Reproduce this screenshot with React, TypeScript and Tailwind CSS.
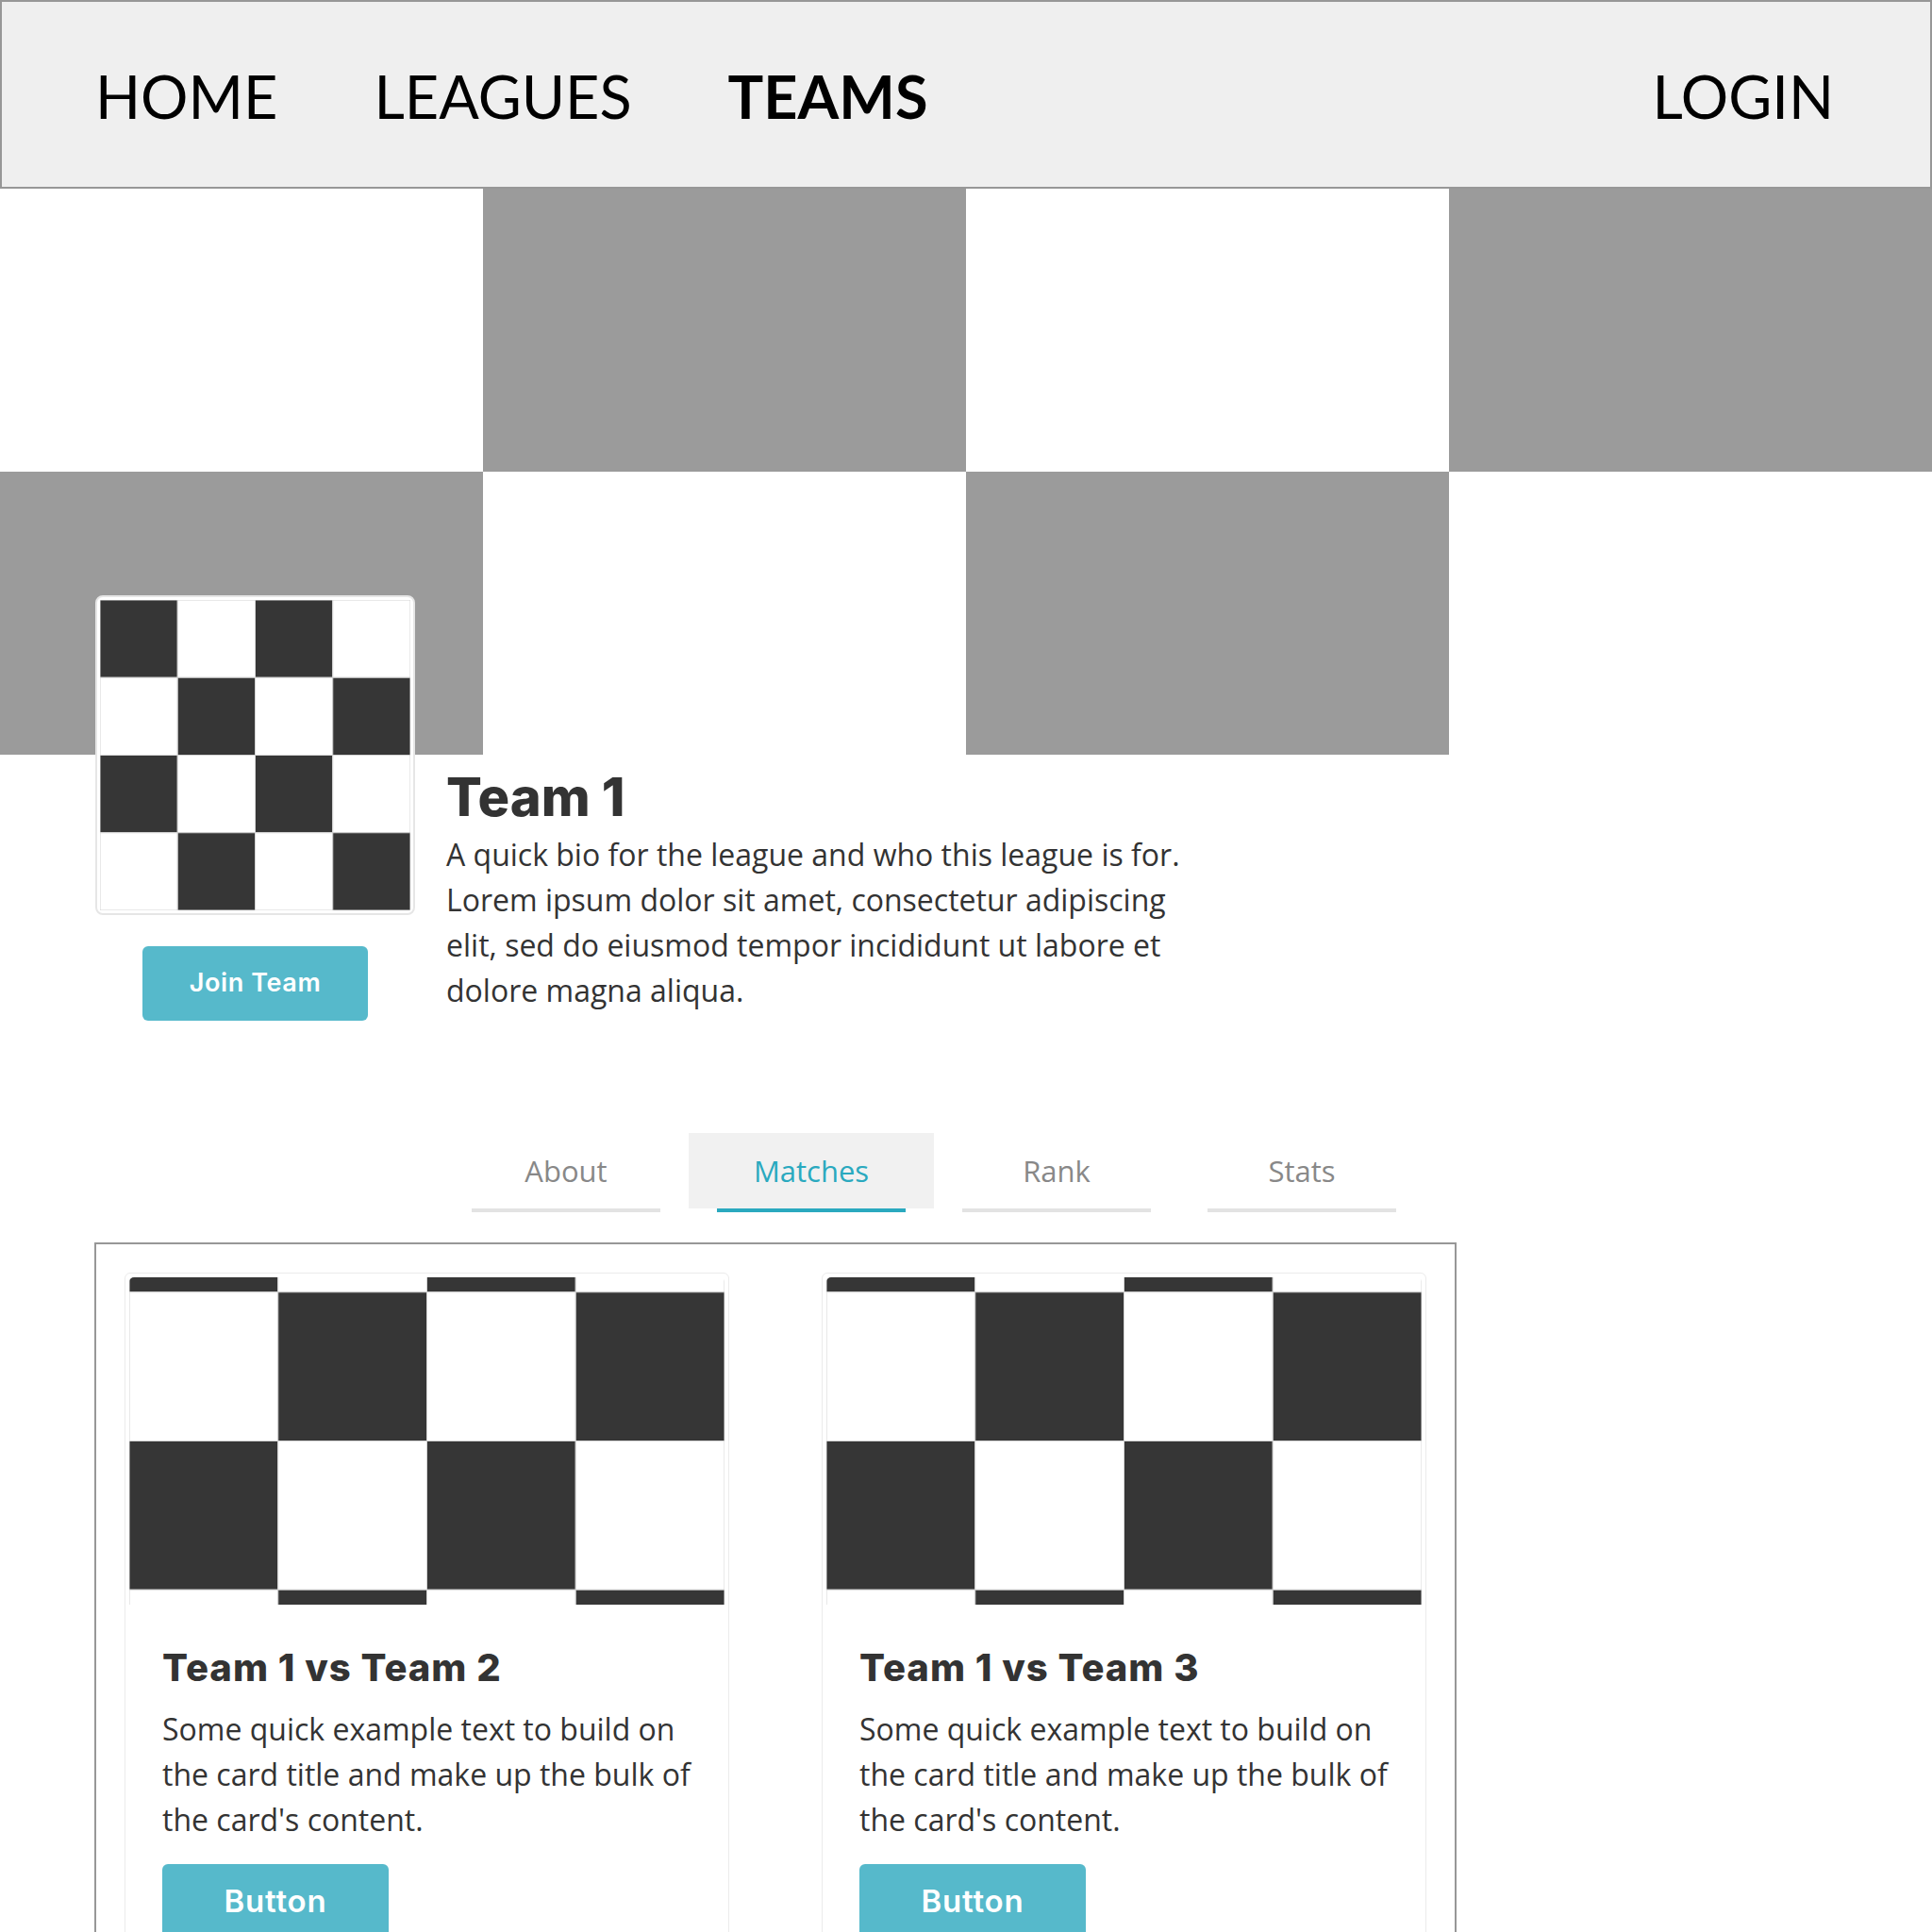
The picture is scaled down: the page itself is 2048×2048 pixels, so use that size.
import React from 'react';

/**
 * Team page
 * Nav bar, banner, team header, tabs and the match cards.
 */

const navLinks = [
  { label: 'HOME', active: false },
  { label: 'LEAGUES', active: false },
  { label: 'TEAMS', active: true },
];

const tabs = ['About', 'Matches', 'Rank', 'Stats'];

const matches = [
  { id: 1, title: 'Team 1 vs Team 2' },
  { id: 2, title: 'Team 1 vs Team 3' },
];

// 4x4 checker, dark cell when (row + col) is even
function Checker({ cell, className }: { cell: number; className?: string }) {
  const size = cell * 4;
  const cells: { x: number; y: number; dark: boolean }[] = [];
  for (let r = 0; r < 4; r++) {
    for (let c = 0; c < 4; c++) {
      cells.push({ x: c * cell, y: r * cell, dark: (r + c) % 2 === 0 });
    }
  }
  return (
    <svg
      className={className}
      viewBox={`0 0 ${size} ${size}`}
      preserveAspectRatio="xMidYMid slice"
    >
      <rect width={size} height={size} fill="#ffffff" />
      {cells.map((c, i) => (
        <rect
          key={i}
          x={c.x}
          y={c.y}
          width={cell}
          height={cell}
          fill={c.dark ? '#363636' : '#ffffff'}
          stroke="#d4d4d4"
          strokeWidth={1}
          vectorEffect="non-scaling-stroke"
        />
      ))}
    </svg>
  );
}

export default function App() {
  return (
    <div className="min-h-screen bg-white font-['Open_Sans',sans-serif] text-[#333333]">
      {/* Top navigation */}
      <nav className="h-[200px] bg-[#efefef] border-2 border-[#979797] flex items-center pl-[99px] pr-[102px] pt-[4px] font-['Lato',sans-serif] text-[63px] text-black">
        <div className="flex items-center gap-[102px]">
          {navLinks.map((link) => (
            <a key={link.label} className={link.active ? 'font-bold' : 'font-normal'}>
              {link.label}
            </a>
          ))}
        </div>
        <a className="ml-auto">LOGIN</a>
      </nav>

      {/* Banner */}
      <div className="grid grid-cols-4 grid-rows-2 h-[600px]">
        <div className="bg-white" />
        <div className="bg-[#9b9b9b]" />
        <div className="bg-white" />
        <div className="bg-[#9b9b9b]" />
        <div className="bg-[#9b9b9b]" />
        <div className="bg-white" />
        <div className="bg-[#9b9b9b]" />
        <div className="bg-white" />
      </div>

      {/* Team header */}
      <section className="flex gap-[33px] pl-[101px]">
        <div className="relative w-[339px] -mt-[169px] flex flex-col items-center">
          <div className="w-[339px] h-[339px] bg-white border-2 border-[#e6e6e6] rounded-[8px] p-[3px]">
            <Checker cell={83} className="w-full h-full" />
          </div>
          <button className="mt-[33px] w-[239px] h-[79px] rounded-[6px] bg-[#56b9cb] text-white text-[27px] tracking-[0.6px] font-semibold font-['Inter',sans-serif]">
            Join Team
          </button>
        </div>

        <div className="pt-[12px] w-[800px]">
          <h1 className="text-[56px] leading-[1.2] font-extrabold font-['Inter',sans-serif] text-[#333333]">
            Team 1
          </h1>
          <p className="mt-[3px] text-[32px] leading-[48px] text-[#333333]">
            A quick bio for the league and who this league is for. Lorem ipsum dolor sit amet,
            consectetur adipiscing elit, sed do eiusmod tempor incididunt ut labore et dolore
            magna aliqua.
          </p>
        </div>
      </section>

      {/* Tabs */}
      <div className="flex pl-[470px] mt-[119px]">
        {tabs.map((tab) => {
          const active = tab === 'Matches';
          return (
            <div key={tab} className="w-[260px] flex flex-col items-center">
              <div
                className={`w-full h-[80px] flex items-center justify-center text-[31px] ${
                  active ? 'bg-[#f1f1f1] text-[#2aa9bf]' : 'text-[#888888]'
                }`}
              >
                {tab}
              </div>
              <div className={`w-[200px] h-[4px] ${active ? 'bg-[#2aa9bf]' : 'bg-[#e3e3e3]'}`} />
            </div>
          );
        })}
      </div>

      {/* Matches panel */}
      <div className="ml-[100px] w-[1444px] mt-[32px] border-2 border-[#979797] px-[30px] py-[30px] grid grid-cols-2 gap-x-[98px]">
        {matches.map((match) => (
          <div key={match.id} className="border border-[#ebebeb] rounded-[6px] p-[4px] pb-[40px]">
            <div className="h-[347px] rounded-t-[5px] overflow-hidden">
              <Checker cell={158} className="w-full h-full" />
            </div>
            <div className="px-[35px] pt-[43px]">
              <h3 className="text-[40px] leading-[1.2] tracking-[1px] font-extrabold font-['Inter',sans-serif] text-[#333333]">
                {match.title}
              </h3>
              <p className="mt-[17px] text-[32px] leading-[48px] text-[#333333]">
                Some quick example text to build on the card title and make up the bulk of the
                card's content.
              </p>
              <button className="mt-[23px] w-[240px] h-[80px] rounded-[6px] bg-[#56b9cb] text-white text-[33px] tracking-[0.8px] font-semibold font-['Inter',sans-serif]">
                Button
              </button>
            </div>
          </div>
        ))}
      </div>
    </div>
  );
}
